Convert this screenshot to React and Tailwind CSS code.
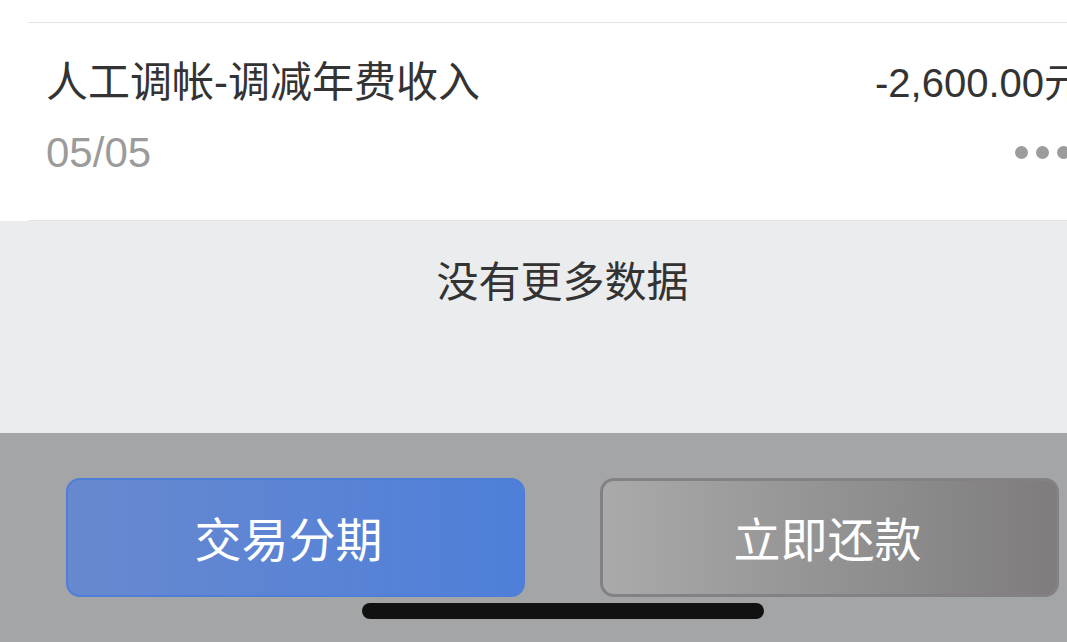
export default function App() {
  return (
    <div
      className="w-full h-[642px] overflow-hidden flex flex-col bg-white"
      style={{ fontFamily: '"Liberation Sans", "Noto Sans CJK SC", sans-serif' }}
    >
      {/* previous item tail */}
      <div className="h-[24px] pl-[28px] bg-white">
        <div className="h-[23px] border-b border-[#e4e4e4]" />
      </div>

      {/* bill item */}
      <div className="h-[197px] pl-[28px] bg-white">
        <div className="h-full border-b border-[#e4e4e4] flex justify-between pl-[18px] -mr-[17px]">
          <div className="pt-[34px]">
            <div className="text-[42px] leading-[50px] text-[#333]">人工调帐-调减年费收入</div>
            <div className="mt-[20px] text-[42px] leading-[50px] text-[#9b9b9b]">05/05</div>
          </div>
          <div className="pt-[34px] flex flex-col items-end">
            <div className="text-[40px] leading-[50px] text-[#333]">-2,600.00元</div>
            <div className="mt-[38px] pr-[14px] flex gap-[8px]">
              <span className="w-[13px] h-[13px] rounded-full bg-[#9c9c9c]" />
              <span className="w-[13px] h-[13px] rounded-full bg-[#9c9c9c]" />
              <span className="w-[13px] h-[13px] rounded-full bg-[#9c9c9c]" />
            </div>
          </div>
        </div>
      </div>

      {/* no more data */}
      <div className="h-[212px] bg-[#ebecee] pt-[37px] pl-[58px] text-center">
        <div className="text-[42px] leading-[50px] text-[#333]">没有更多数据</div>
      </div>

      {/* action bar */}
      <div className="flex-1 bg-[#a4a5a7] pt-[45px]">
        <div className="flex gap-[75px] pl-[66px]">
          <button className="w-[459px] h-[119px] pt-[6px] pr-[14px] rounded-[14px] border-2 border-[#4f7ed9] bg-gradient-to-r from-[#6889cf] to-[#4e7fd9] text-white text-[47px] leading-none">
            交易分期
          </button>
          <button className="w-[459px] h-[119px] pt-[6px] pr-[4px] rounded-[14px] border-[3px] border-[#838183] bg-gradient-to-r from-[#aaaaaa] to-[#7e7c7d] text-white text-[47px] leading-none">
            立即还款
          </button>
        </div>
        <div className="mt-[6px] ml-[362px] w-[402px] h-[16px] rounded-full bg-[#111]" />
      </div>
    </div>
  );
}
